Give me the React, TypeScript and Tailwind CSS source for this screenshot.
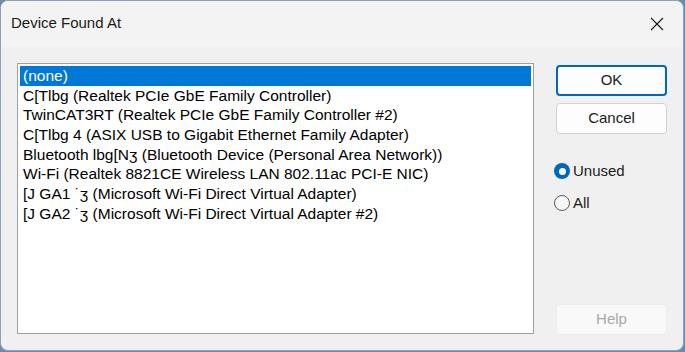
const items = [
  "(none)",
  "C[Tlbg (Realtek PCIe GbE Family Controller)",
  "TwinCAT3RT (Realtek PCIe GbE Family Controller #2)",
  "C[Tlbg 4 (ASIX USB to Gigabit Ethernet Family Adapter)",
  "Bluetooth lbg[N\u0292 (Bluetooth Device (Personal Area Network))",
  "Wi-Fi (Realtek 8821CE Wireless LAN 802.11ac PCI-E NIC)",
  "[J GA1 \u02d9\u0292 (Microsoft Wi-Fi Direct Virtual Adapter)",
  "[J GA2 \u02d9\u0292 (Microsoft Wi-Fi Direct Virtual Adapter #2)",
];

function Btn({ label, primary, disabled }: { label: string; primary?: boolean; disabled?: boolean }) {
  return (
    <div
      className={
        "h-[31px] w-[111px] rounded-[4px] flex items-center justify-center text-[15px] " +
        (primary
          ? "border-2 border-[#0067c0] bg-[#fdfdfd] text-[#1b1b1b]"
          : disabled
          ? "border border-[#ececec] bg-[#f9f9f9] text-[#a8a8a8]"
          : "border border-[#d3d3d3] bg-[#fdfdfd] text-[#1b1b1b]")
      }
    >
      {label}
    </div>
  );
}

function Radio({ label, checked }: { label: string; checked?: boolean }) {
  return (
    <div className="flex items-center h-[20px]">
      {checked ? (
        <div className="w-[16px] h-[16px] rounded-full bg-[#0067c0] flex items-center justify-center">
          <div className="w-[7px] h-[7px] rounded-full bg-white" />
        </div>
      ) : (
        <div className="w-[16px] h-[16px] rounded-full border border-[#5a5a5a] bg-[#f7f7f7]" />
      )}
      <span className="ml-[3px] text-[15px] text-[#1b1b1b]">{label}</span>
    </div>
  );
}

export default function App() {
  return (
    <div className="w-[685px] h-[352px] bg-[#6a8cab] overflow-hidden" style={{ fontFamily: "'Liberation Sans', Arial, sans-serif" }}>
      <div className="w-[684px] h-[351px] rounded-[8px] bg-[#f0f0f0] border border-[#8aa3b8] overflow-hidden flex flex-col">
        {/* Title bar */}
        <div className="h-[46px] bg-[#f3f3f3] flex items-center pl-[10px] pr-[18px] justify-between">
          <span className="text-[15px] text-[#1a1a1a] -mt-[2px]">Device Found At</span>
          <svg width="16" height="16" viewBox="0 0 16 16" className="-mt-[1px]">
            <path d="M2 2 L14 14 M14 2 L2 14" stroke="#1a1a1a" strokeWidth="1.1" />
          </svg>
        </div>

        {/* Body */}
        <div className="flex flex-1 pt-[16px] pl-[16px]">
          <div className="w-[517px] h-[271px] border border-[#a0a0a0] bg-white p-[2px]">
            {items.map((t, i) => (
              <div
                key={i}
                className={
                  "h-[19.7px] pl-[3px] leading-[19px] text-[15.5px] whitespace-nowrap " +
                  (i === 0 ? "bg-[#0078d7] text-white" : "text-[#000]")
                }
              >
                {t}
              </div>
            ))}
          </div>

          <div className="ml-[22px] flex flex-col w-[111px] pt-[2px]">
            <Btn label="OK" primary />
            <div className="h-[7px]" />
            <Btn label="Cancel" />
            <div className="mt-[27px] flex flex-col gap-[12px] -ml-[2px]">
              <Radio label="Unused" checked />
              <Radio label="All" />
            </div>
            <div className="mt-auto mb-[15px]">
              <Btn label="Help" disabled />
            </div>
          </div>
        </div>
      </div>
    </div>
  );
}
